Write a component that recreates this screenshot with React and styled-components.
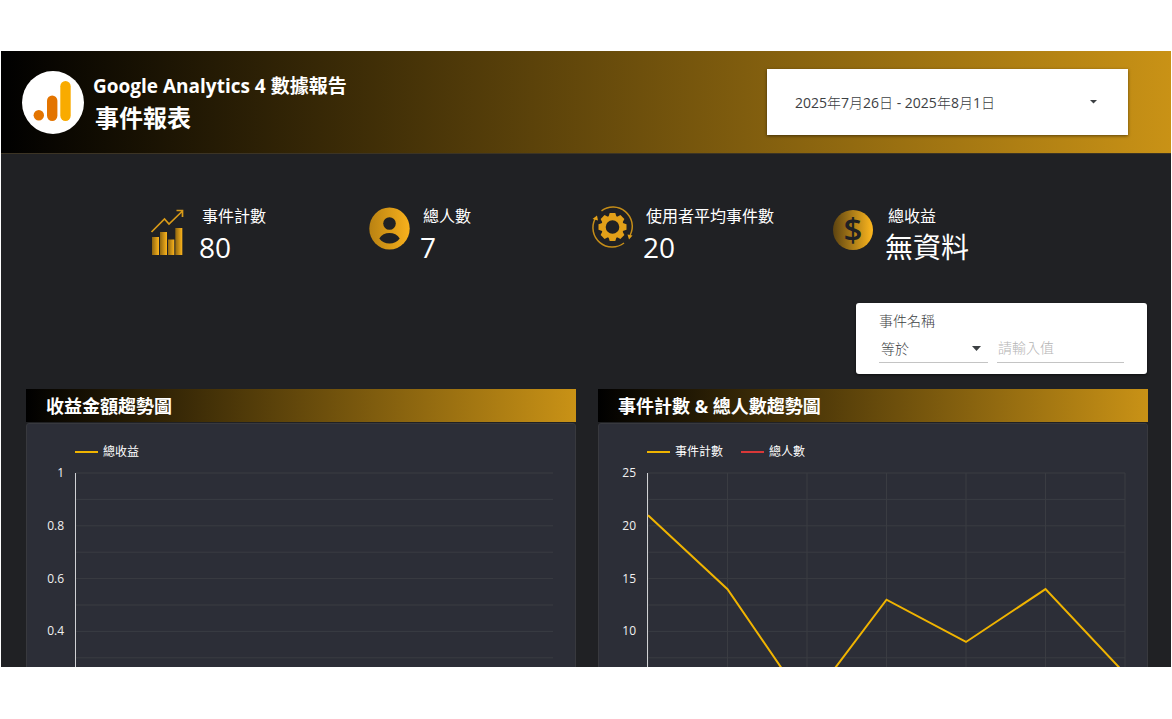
import React from "react";
import styled, { createGlobalStyle } from "styled-components";

const GRADIENT = "linear-gradient(90deg, #000000, #c99216)";

const metrics = [
  { label: "事件計數", value: "80", icon: "bars" },
  { label: "總人數", value: "7", icon: "user" },
  { label: "使用者平均事件數", value: "20", icon: "gear" },
  { label: "總收益", value: "無資料", icon: "dollar" },
];

const charts = [
  {
    title: "收益金額趨勢圖",
    ticks: ["1", "0.8", "0.6", "0.4"],
    max: 1,
    columns: 0,
    series: [{ name: "總收益", color: "#f0b400", points: [] }],
  },
  {
    title: "事件計數 & 總人數趨勢圖",
    ticks: ["25", "20", "15", "10"],
    max: 25,
    columns: 6,
    series: [
      { name: "事件計數", color: "#f0b400", points: [21, 14, 3, 13, 9, 14, 6] },
      { name: "總人數", color: "#d93838", points: [2, 1, 1, 2, 1, 2, 1] },
    ],
  },
];

const Gold = ({ id, from = "#b07d12", to = "#fdb51c" }) => (
  <defs>
    <linearGradient id={id} x1="0" x2="1" y1="0" y2="0">
      <stop offset="0" stopColor={from} />
      <stop offset="1" stopColor={to} />
    </linearGradient>
  </defs>
);

const BarsIcon = () => (
  <Icon viewBox="0 0 42 52" aria-hidden="true">
    <Gold id="bars" from="#8f6610" />
    <path
      d="M2.500 27 15.500 14l4.500 5L33.500 6M27.500 5.500h6V12"
      fill="none"
      stroke="#d89a18"
      strokeWidth="1.700"
    />
    <rect x="3" y="32" width="7" height="18" fill="url(#bars)" />
    <rect x="11" y="27" width="7" height="23" fill="url(#bars)" />
    <rect x="19" y="34.500" width="6.300" height="15.500" fill="url(#bars)" />
    <rect x="26.300" y="23" width="7" height="27" fill="url(#bars)" />
  </Icon>
);

const UserIcon = () => (
  <Icon viewBox="0 0 42 52" aria-hidden="true">
    <Gold id="user" from="#b98212" to="#f9b11c" />
    <ellipse cx="19.500" cy="23.500" rx="20.200" ry="21" fill="url(#user)" />
    <circle cx="19.500" cy="18.500" r="6.300" fill="#202124" />
    <path
      d="M9.300 33.500c2.200-3.800 6-5.500 10.200-5.500s8 1.700 10.200 5.500c-2.400 3.500-6 5-10.200 5s-7.800-1.500-10.200-5z"
      fill="#202124"
    />
  </Icon>
);

const teeth = [0, 45, 90, 135, 180, 225, 270, 315];

const GearIcon = () => (
  <Icon viewBox="0 0 42 52" aria-hidden="true">
    <circle cx="19.500" cy="22" r="9" fill="none" stroke="#e2a019" strokeWidth="4.400" />
    {teeth.map((angle) => (
      <path
        key={angle}
        d="M15.300 12.500 16.700 8h5.600l1.400 4.500z"
        fill="#e2a019"
        transform={`rotate(${angle} 19.500 22)`}
      />
    ))}
    <g fill="none" stroke="#c58d18" strokeWidth="1.500">
      <path d="M8.500 5.800A19.300 19.300 0 0 1 37.200 30" />
      <path d="M31 38A19.300 19.300 0 0 1 2 14" />
    </g>
    <path d="M34.500 29.500l5 1-3.500 4zM-.5 14l4.500-3.500 1 5z" fill="#e2a019" />
  </Icon>
);

const DollarIcon = () => (
  <Icon viewBox="0 0 42 52" aria-hidden="true">
    <Gold id="dollar" from="#5c4311" to="#ffb81e" />
    <circle cx="18" cy="25" r="20" fill="url(#dollar)" />
    <text
      x="18"
      y="37"
      textAnchor="middle"
      fontSize="33"
      fontWeight="600"
      fill="#202124"
    >
      $
    </text>
  </Icon>
);

const icons = {
  bars: BarsIcon,
  user: UserIcon,
  gear: GearIcon,
  dollar: DollarIcon,
};

const Chart = ({ chart }) => {
  const left = 49;
  const top = 12;
  const width = 477;
  const height = 264;
  const rows = [...Array(11).keys()];
  const lines = [...Array(chart.columns + 1).keys()];
  const toPoint = (value, index) =>
    `${left + (index * width) / 6},${top + height - (value / chart.max) * height}`;

  return (
    <Plot viewBox="0 0 548 300" role="img" aria-label={chart.title}>
      {rows.map((row) => (
        <line
          key={row}
          x1={left}
          x2={left + width}
          y1={top + (row * height) / 10}
          y2={top + (row * height) / 10}
          stroke="#3a3c42"
        />
      ))}
      {chart.columns > 0 &&
        lines.map((line) => (
          <line
            key={line}
            x1={left + (line * width) / chart.columns}
            x2={left + (line * width) / chart.columns}
            y1={top}
            y2={top + height}
            stroke="#3a3c42"
          />
        ))}
      <line x1={left - 0.5} x2={left - 0.5} y1={top} y2={top + height} stroke="#d0d1d4" />
      {chart.ticks.map((tick, index) => (
        <text
          key={tick}
          x={left - 12}
          y={top + 4 + (index * height) / 5}
          textAnchor="end"
          fontSize="12"
          fontWeight="500"
          fill="#f1f1f1"
        >
          {tick}
        </text>
      ))}
      {chart.series.map((item) => (
        <polyline
          key={item.name}
          points={item.points.map(toPoint).join(" ")}
          fill="none"
          stroke={item.color}
          strokeWidth="2"
        />
      ))}
    </Plot>
  );
};

const DateText = ({ year, month, day }) => (
  <>
    {year}
    <Unit>年</Unit>
    {month}
    <Unit>月</Unit>
    {day}
    <Unit>日</Unit>
  </>
);

const App = () => {
  return (
    <Page>
      <GlobalStyle />
      <Report>
        <Header>
          <Brand>
            <Logo viewBox="0 0 62 64" aria-hidden="true">
              <ellipse cx="31" cy="32.500" rx="31" ry="31.500" fill="#ffffff" />
              <circle cx="16.800" cy="45.300" r="5.200" fill="#e37400" />
              <rect x="25" y="25.500" width="10.400" height="25.500" rx="5.200" fill="#e37400" />
              <rect x="38.300" y="11" width="10.400" height="40" rx="5.200" fill="#f9ab00" />
            </Logo>
            <div>
              <Product>Google Analytics 4 數據報告</Product>
              <Title>事件報表</Title>
            </div>
          </Brand>
          <DateButton type="button">
            <span>
              <DateText year={2025} month={7} day={26} /> -{" "}
              <DateText year={2025} month={8} day={1} />
            </span>
            <svg width="7" height="4" viewBox="0 0 7 4" aria-hidden="true">
              <path d="M0 0h7L3.500 3.500z" fill="#3c4043" />
            </svg>
          </DateButton>
        </Header>

        <Metrics>
          {metrics.map((metric) => {
            const MetricIcon = icons[metric.icon];
            return (
              <Metric key={metric.label}>
                <MetricIcon />
                <div>
                  <MetricLabel>{metric.label}</MetricLabel>
                  <MetricValue>{metric.value}</MetricValue>
                </div>
              </Metric>
            );
          })}
        </Metrics>

        <Filter>
          <FilterLabel htmlFor="event-name">事件名稱</FilterLabel>
          <FilterFields>
            <SelectWrap>
              <select aria-label="條件" defaultValue="equals">
                <option value="equals">等於</option>
                <option value="contains">包含</option>
              </select>
              <svg width="9" height="5" viewBox="0 0 9 5" aria-hidden="true">
                <path d="M0 0h9L4.500 5z" fill="#3c4043" />
              </svg>
            </SelectWrap>
            <FilterInput
              id="event-name"
              type="text"
              placeholder="請輸入值"
              autoComplete="off"
            />
          </FilterFields>
        </Filter>

        <Panels>
          {charts.map((chart) => (
            <section key={chart.title}>
              <PanelTitle>{chart.title}</PanelTitle>
              <PanelBody>
                <Legend>
                  {chart.series.map((item) => (
                    <LegendItem key={item.name} $color={item.color}>
                      {item.name}
                    </LegendItem>
                  ))}
                </Legend>
                <Chart chart={chart} />
              </PanelBody>
            </section>
          ))}
        </Panels>
      </Report>
    </Page>
  );
};

const GlobalStyle = createGlobalStyle`
  * {
    box-sizing: border-box;
  }

  body {
    margin: 0;
    background: #ffffff;
  }

  body, button, input, select {
    font-family: "Open Sans", "Noto Sans CJK TC", sans-serif;
  }
`;

const Page = styled.div`
  height: 100vh;
  padding: 51px 1px 52px;
`;

const Report = styled.main`
  height: 100%;
  overflow: hidden;
  background: #202124;
  color: #ffffff;
`;

const Header = styled.header`
  display: flex;
  align-items: center;
  justify-content: space-between;
  padding: 18px 43px 18px 21px;
  border-bottom: 1px solid #3c3424;
  background: ${GRADIENT};
`;

const Brand = styled.div`
  display: flex;
  align-items: center;
  gap: 9px;
`;

const Logo = styled.svg`
  width: 62px;
  height: 64px;
`;

const Product = styled.p`
  margin: 0;
  font-size: 19px;
  font-weight: 700;
  line-height: 32px;
`;

const Title = styled.h1`
  margin: 0;
  padding-left: 2px;
  font-size: 24px;
  font-weight: 700;
  line-height: 32px;
`;

const DateButton = styled.button`
  display: flex;
  align-items: center;
  justify-content: space-between;
  width: 361px;
  height: 66px;
  padding: 0 31px 0 28px;
  border: 0;
  background: #ffffff;
  box-shadow: 0 1px 3px rgba(0, 0, 0, 0.5);
  color: #3c4043;
  font-size: 14px;
`;

const Unit = styled.span`
  font-weight: 300;
`;

const Metrics = styled.section`
  display: grid;
  grid-template-columns: 221fr 223fr 242fr 336fr;
  padding: 51px 0 0 148px;
`;

const Metric = styled.div`
  display: flex;
  gap: 8px;
`;

const Icon = styled.svg`
  flex: none;
  width: 42px;
  height: 52px;
  overflow: visible;
`;

const MetricLabel = styled.div`
  padding-left: 3px;
  font-size: 16px;
  line-height: 22px;
`;

const MetricValue = styled.div`
  font-size: 28px;
  line-height: 40px;
`;

const Filter = styled.form`
  width: 291px;
  height: 71px;
  margin: 36px 24px 15px auto;
  padding: 8px 23px 0;
  border-radius: 3px;
  background: #ffffff;
  box-shadow: 0 1px 3px rgba(0, 0, 0, 0.6);
  color: #3c4043;
`;

const FilterLabel = styled.label`
  display: block;
  font-size: 14px;
  font-weight: 300;
  line-height: 20px;
`;

const FilterFields = styled.div`
  display: flex;
  gap: 9px;
  margin-top: 4px;
`;

const SelectWrap = styled.div`
  display: flex;
  align-items: center;
  width: 109px;
  height: 28px;
  padding-right: 7px;
  border-bottom: 1px solid #c4c4c4;

  select {
    flex: 1;
    padding: 0 0 0 2px;
    border: 0;
    appearance: none;
    background: transparent;
    color: #3c4043;
    font-size: 14px;
    font-weight: 300;
  }
`;

const FilterInput = styled.input`
  flex: 1;
  min-width: 0;
  height: 28px;
  padding: 0 1px 2px;
  border: 0;
  border-bottom: 1px solid #c4c4c4;
  color: #3c4043;
  font-size: 14px;
  font-weight: 300;

  &::placeholder {
    color: #b4b4b4;
  }
`;

const Panels = styled.div`
  display: grid;
  grid-template-columns: 1fr 1fr;
  gap: 22px;
  padding: 0 23px 0 25px;
`;

const PanelTitle = styled.h2`
  margin: 0 0 1px;
  padding: 2px 20px 0;
  background: ${GRADIENT};
  font-size: 18px;
  font-weight: 700;
  line-height: 31px;
`;

const PanelBody = styled.div`
  padding-top: 19px;
  border: 1px solid #38393e;
  border-radius: 3px;
  background: #2c2e37;
`;

const Legend = styled.div`
  display: flex;
  gap: 18px;
  padding-left: 48px;
`;

const LegendItem = styled.span`
  display: flex;
  align-items: center;
  gap: 5px;
  font-size: 12px;
  line-height: 18px;

  &::before {
    content: "";
    width: 23px;
    height: 2px;
    background: ${({ $color }) => $color};
  }
`;

const Plot = styled.svg`
  display: block;
  width: 100%;
`;

export default App;
